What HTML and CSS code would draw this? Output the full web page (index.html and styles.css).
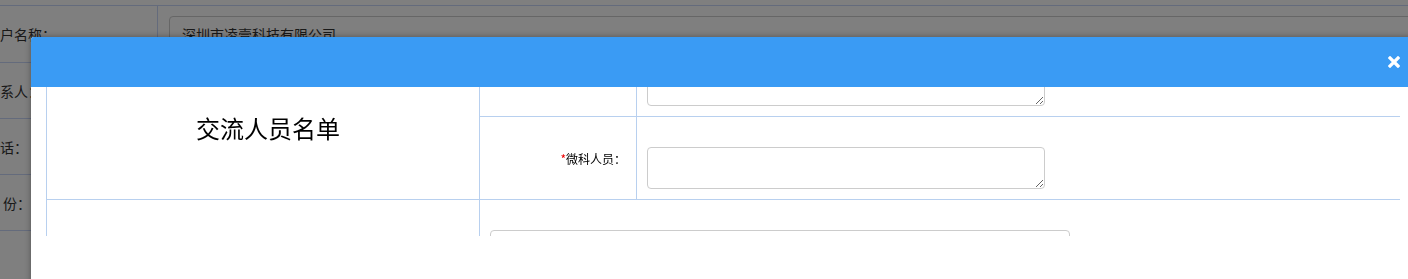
FILE: index.html
```html
<!DOCTYPE html>
<html lang="zh-CN">
<head>
  <meta charset="UTF-8">
  <meta name="viewport" content="width=device-width, initial-scale=1.0">
  <title>交流人员名单</title>
  <link rel="stylesheet" href="styles.css">
</head>
<body>
  <div class="page">
    <table class="info">
      <tr class="first">
        <th>户名称：</th>
        <td><div class="field">深圳市凌壹科技有限公司</div></td>
      </tr>
      <tr><th>系人：</th><td></td></tr>
      <tr><th>话：</th><td></td></tr>
      <tr><th class="indent">份：</th><td></td></tr>
      <tr><th></th><td></td></tr>
    </table>
  </div>

  <div class="mask"></div>

  <div class="dialog">
    <div class="dialog-head">
      <span class="close" title="关闭">
        <svg width="12" height="12" viewBox="0 0 12 12">
          <path d="M2 2L10 10M10 2L2 10" stroke="#fff" stroke-width="3.2" stroke-linecap="square"/>
        </svg>
      </span>
    </div>
    <div class="dialog-body">
      <div class="scroller">
        <table class="form">
          <colgroup>
            <col class="c1">
            <col class="c2">
            <col class="c3">
          </colgroup>
          <tr>
            <td class="title" rowspan="2">交流人员名单</td>
            <td class="label"></td>
            <td class="value"><textarea></textarea></td>
          </tr>
          <tr>
            <td class="label"><span class="req">*</span>微科人员：</td>
            <td class="value"><textarea></textarea></td>
          </tr>
          <tr>
            <td class="title"></td>
            <td class="value" colspan="2"><input type="text" class="wide"></td>
          </tr>
        </table>
      </div>
    </div>
  </div>
</body>
</html>
```

FILE: styles.css
```css
html, body {
  margin: 0;
  padding: 0;
  overflow: hidden;
  background: #fff;
  font-family: "Noto Sans CJK SC", "Liberation Sans", sans-serif;
  color: #333;
}
.page {
  padding-top: 5px;
}
.info {
  border-collapse: collapse;
  width: 1500px;
  font-size: 14px;
}
.info th, .info td {
  border-top: 1px solid #c8d6f8;
  height: 55px;
  padding: 0;
}
.info th {
  width: 154px;
  text-align: left;
  font-weight: normal;
}
.info th.indent {
  padding-left: 3px;
}
.info td {
  border-left: 1px solid #c8d6f8;
}
.info .first th, .info .first td {
  height: 56px;
}
.field {
  margin-left: 11px;
  height: 36px;
  line-height: 34px;
  box-sizing: border-box;
  border: 1px solid #ccc;
  border-radius: 4px;
  padding-left: 12px;
}
.mask {
  position: fixed;
  top: 0;
  left: 0;
  right: 0;
  bottom: 0;
  background: rgba(0, 0, 0, 0.5);
}
.dialog {
  position: absolute;
  top: 37px;
  left: 31px;
  width: 1384px;
  height: 260px;
  background: #fff;
  border-radius: 3px 3px 0 0;
  box-shadow: 0 0 6px rgba(0, 0, 0, 0.35);
}
.dialog-head {
  height: 50px;
  background: #3a9bf4;
  border-radius: 3px 3px 0 0;
  display: flex;
  align-items: center;
  justify-content: flex-end;
  padding-right: 15px;
}
.close {
  display: flex;
  width: 12px;
  height: 12px;
  cursor: pointer;
}
.dialog-body {
  padding: 0 15px;
}
.scroller {
  height: 149px;
  overflow: hidden;
}
.form {
  border-collapse: collapse;
  table-layout: fixed;
  width: 1354px;
  margin-top: -54px;
  font-size: 12px;
  color: #000;
}
.form .c1 { width: 433px; }
.form .c2 { width: 157px; }
.form .c3 { width: 764px; }
.form td {
  border: 1px solid #b8d0ef;
}
.form .title {
  text-align: center;
  font-size: 24px;
  padding: 21px 0 0 10px;
}
.form .label {
  text-align: right;
  padding: 0 10px 0 0;
}
.req {
  color: #e00;
}
.form .value {
  padding: 30px 10px 10px 10px;
  vertical-align: top;
}
textarea {
  display: block;
  width: 398px;
  height: 42px;
  box-sizing: border-box;
  margin: 0;
  border: 1px solid #ccc;
  border-radius: 4px;
  font-family: inherit;
}
.wide {
  display: block;
  width: 580px;
  height: 34px;
  box-sizing: border-box;
  margin: 0;
  border: 1px solid #ccc;
  border-radius: 4px;
}
```
